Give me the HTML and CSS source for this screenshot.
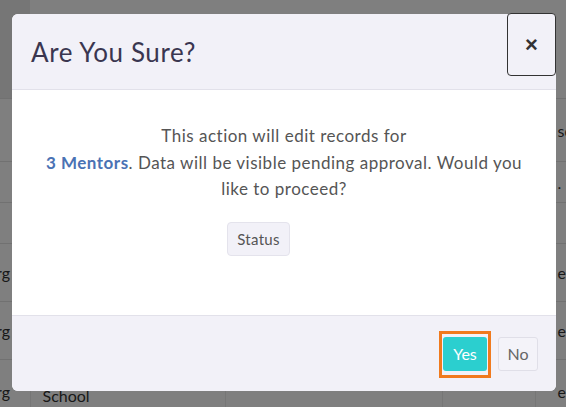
FILE: index.html
```html
<!DOCTYPE html>
<html lang="en">
<head>
    <meta charset="UTF-8">
    <meta name="viewport" content="width=device-width, initial-scale=1.0">
    <title>Are You Sure?</title>
    <link rel="stylesheet" href="styles.css">
</head>
<body>

    <!-- Table behind the dialog -->
    <table class="records">
        <tr class="head-row"><td></td><td></td><td></td><td></td><td></td></tr>
        <tr class="row-a"><td></td><td></td><td></td><td></td><td class="cut">se</td></tr>
        <tr class="row-b"><td></td><td></td><td></td><td></td><td class="cut">.</td></tr>
        <tr class="row-b"><td></td><td></td><td></td><td></td><td class="cut"></td></tr>
        <tr class="row-c"><td class="end">rg</td><td></td><td></td><td></td><td class="cut">e</td></tr>
        <tr class="row-c"><td class="end">rg</td><td></td><td></td><td></td><td class="cut">e</td></tr>
        <tr class="row-d"><td class="end">rg</td><td class="school">School</td><td></td><td></td><td class="cut">e</td></tr>
    </table>

    <!-- Dim layer -->
    <div class="backdrop"></div>

    <!-- Dialog -->
    <div class="modal">
        <div class="modal-header">
            <h2 class="modal-title">Are You Sure?</h2>
            <button class="close-btn">&times;</button>
        </div>
        <div class="modal-body">
            <p class="message">This action will edit records for<br><strong>3 Mentors</strong>. Data will be visible pending approval. Would you<br>like to proceed?</p>
            <button class="status-btn">Status</button>
        </div>
        <div class="modal-footer">
            <button class="btn-yes">Yes</button>
            <button class="btn-no">No</button>
        </div>
    </div>

</body>
</html>
```

FILE: styles.css
```css
/* Page */
html {
    overflow: hidden;
}

body {
    margin: 0;
    font-family: Lato, "Noto Sans", sans-serif;
    background: #ffffff;
    height: 407px;
    overflow: hidden;
}

/* Table behind */
.records {
    width: 566px;
    border-collapse: collapse;
    color: #333;
    font-size: 16px;
    table-layout: fixed;
}

.records td {
    border-top: 1px solid #e2e2e2;
    border-left: 1px solid #ececec;
    padding: 0;
    vertical-align: middle;
}

.records td:nth-child(1) { width: 30px; border-left: none; }
.records td:nth-child(2) { width: 195px; }
.records td:nth-child(3) { width: 217px; }
.records td:nth-child(4) { width: 93px; }

.head-row td {
    height: 98px;
    border-top: none;
    border-left: none;
}

.head-row td:first-child {
    background: #ececec;
}

.row-a td { height: 62px; }
.row-b td { height: 40px; }
.row-c td { height: 57px; }
.row-d td { height: 50px; vertical-align: top; padding-top: 22px; }

.end {
    text-indent: -4px;
    overflow: hidden;
}

.cut {
    padding-left: 22px !important;
    overflow: hidden;
    white-space: nowrap;
}

.school {
    padding: 26px 0 0 12px !important;
}

/* Dim layer */
.backdrop {
    position: fixed;
    inset: 0;
    background: rgba(0, 0, 0, 0.5);
}

/* Dialog */
.modal {
    position: fixed;
    top: 14px;
    left: 12px;
    width: 544px;
    background: #fff;
    border-radius: 6px;
}

.modal-header {
    display: flex;
    justify-content: space-between;
    height: 75px;
    background: #f2f1f8;
    border-bottom: 1px solid #e2e1ea;
    border-radius: 6px 6px 0 0;
}

.modal-title {
    margin: 0;
    padding-left: 19px;
    align-self: center;
    font-size: 26px;
    font-weight: 400;
    letter-spacing: 0.6px;
    color: #3a3650;
}

.close-btn {
    width: 49px;
    height: 63px;
    margin-top: -1px;
    border: 1.5px solid #333;
    border-radius: 4px;
    background: #f2f1f8;
    font-family: Arial, sans-serif;
    font-size: 22px;
    font-weight: 700;
    color: #333;
    padding: 0;
}

.modal-body {
    height: 225px;
    box-sizing: border-box;
    padding-top: 33px;
    text-align: center;
}

.message {
    margin: 0 0 19px;
    font-size: 17px;
    line-height: 26.5px;
    letter-spacing: 0.5px;
    color: #555;
}

.message strong {
    color: #4a72b4;
}

.status-btn {
    height: 34px;
    margin-right: 51px;
    padding: 0 9px;
    background: #f2f1f8;
    border: 1px solid #e4e3ec;
    border-radius: 4px;
    font-family: inherit;
    font-size: 15px;
    letter-spacing: 0.3px;
    color: #555;
}

.modal-footer {
    display: flex;
    justify-content: flex-end;
    align-items: center;
    gap: 11px;
    height: 75px;
    padding-right: 18px;
    background: #f2f1f8;
    border-top: 1px solid #e2e1ea;
    border-radius: 0 0 6px 6px;
}

.btn-yes,
.btn-no {
    height: 34px;
    border-radius: 3px;
    font-family: inherit;
    font-size: 16px;
}

.btn-yes {
    position: relative;
    width: 44px;
    padding: 0;
    background: #2bcfcf;
    border: none;
    color: #fff;
}

/* Focus ring around Yes */
.btn-yes::after {
    content: "";
    position: absolute;
    top: -6px;
    bottom: -7px;
    left: -4px;
    right: -4px;
    border: 3px solid #f07a1e;
}

.btn-no {
    width: 40px;
    padding: 0;
    background: #f4f3f9;
    border: 1px solid #e0dfe8;
    color: #666;
}
```
